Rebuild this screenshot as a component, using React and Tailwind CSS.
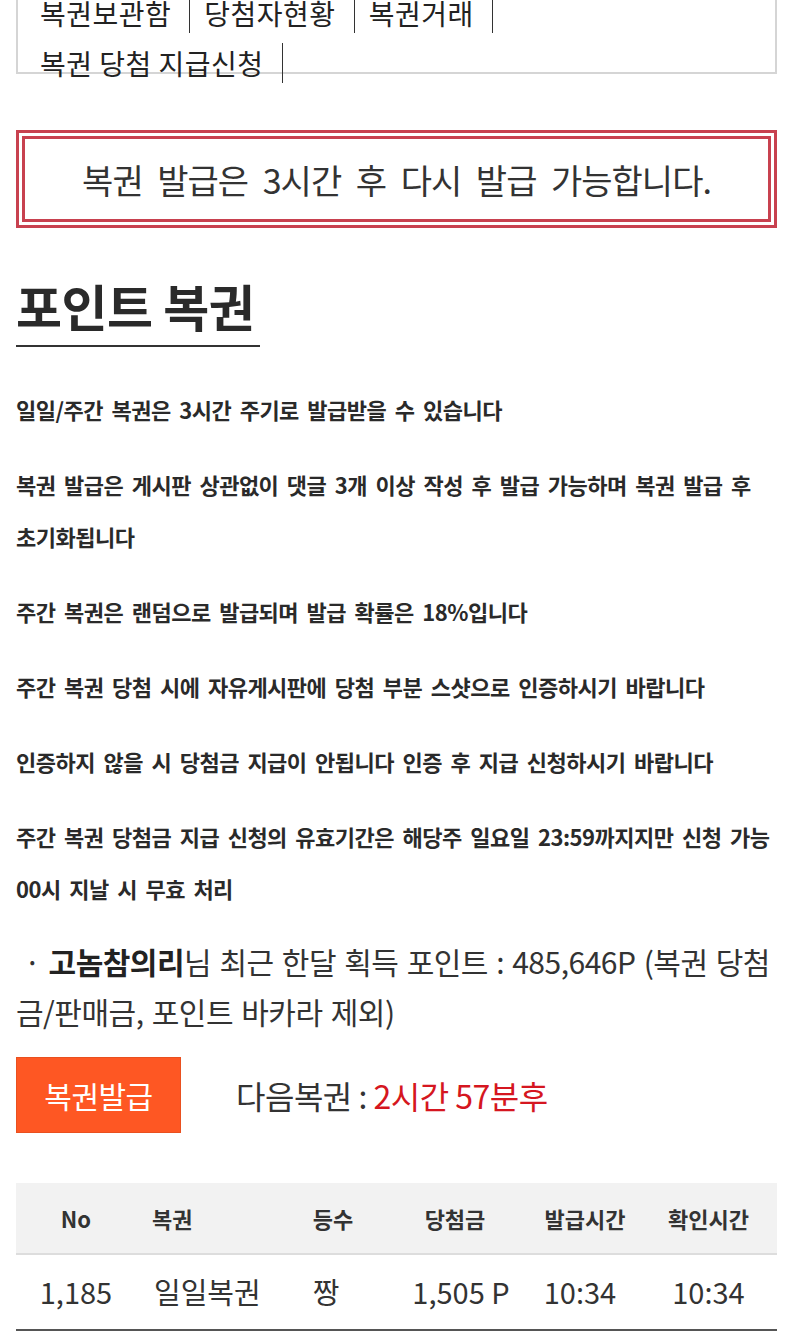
const font = { fontFamily: '"Noto Sans CJK KR", "Noto Sans", sans-serif' }

// each rule is a list of its visual lines
const rules = [
  ['일일/주간 복권은 3시간 주기로 발급받을 수 있습니다'],
  ['복권 발급은 게시판 상관없이 댓글 3개 이상 작성 후 발급 가능하며 복권 발급 후', '초기화됩니다'],
  ['주간 복권은 랜덤으로 발급되며 발급 확률은 18%입니다'],
  ['주간 복권 당첨 시에 자유게시판에 당첨 부분 스샷으로 인증하시기 바랍니다'],
  ['인증하지 않을 시 당첨금 지급이 안됩니다 인증 후 지급 신청하시기 바랍니다'],
  ['주간 복권 당첨금 지급 신청의 유효기간은 해당주 일요일 23:59까지지만 신청 가능', '00시 지날 시 무효 처리'],
]

const menu = [['복권보관함', '당첨자현황', '복권거래'], ['복권 당첨 지급신청']]

const rows = [{ no: '1,185', name: '일일복권', rank: '짱', prize: '1,505 P', issued: '10:34', checked: '10:34' }]

export default function App() {
  return (
    <div className="min-h-[1334px] bg-white pl-4 pr-[23px] text-[#333]" style={font}>
      <div className="mt-[-26px] h-[100px] border-2 border-[#d5d5d5] px-[22px] pt-[12px] text-[28px] leading-[50px] text-[#222]">
        {menu.map((line, i) => (
          <div key={i}>
            {line.map((item) => (
              <span key={item} className="mr-[14px] border-r border-[#333] pr-[18px] tracking-[0.5px]">
                {item}
              </span>
            ))}
          </div>
        ))}
      </div>

      <div className="mt-[56px] border-[3px] border-[#c8414f] p-[3px]">
        <div className="flex h-[86px] items-center justify-center border-[3px] border-[#c8414f] text-[34px] tracking-[-1px] [word-spacing:8px]">
          복권 발급은 3시간 후 다시 발급 가능합니다.
        </div>
      </div>

      <h1 className="mt-[47px] inline-block border-b-2 border-[#333] pb-[10px] pr-[6px] text-[50px] font-bold leading-[60px] tracking-[-0.5px] text-[#2a2a2a]">
        포인트 복권
      </h1>

      <div className="mt-[36px] flex flex-col gap-[23px] text-[22px] font-bold leading-[52px] tracking-[-0.5px] text-[#2a2a2a] [word-spacing:4px]">
        {rules.map((lines) => (
          <p key={lines[0]} className="whitespace-nowrap">
            {lines.map((l, i) => (
              <span key={i} className="block">
                {l}
              </span>
            ))}
          </p>
        ))}
      </div>

      <p className="mt-[22px] whitespace-nowrap pl-[8px] text-[30px] leading-[50px] tracking-[-0.5px] [word-spacing:2px]">
        ·&nbsp;<b className="font-bold text-[#222]">고놈참의리</b>님 최근 한달 획득 포인트 : 485,646P (복권 당첨
        <br />
        <span className="ml-[-8px]">금/판매금, 포인트 바카라 제외)</span>
      </p>

      <div className="mt-[21px] flex items-center">
        <button className="h-[76px] w-[165px] border border-[#e9501f] bg-[#fe5723] text-[30px] tracking-[-0.5px] text-white">
          복권발급
        </button>
        <span className="ml-[55px] text-[32px] tracking-[-0.5px]">
          다음복권 :&nbsp;<span className="text-[#d51620]">2시간 57분후</span>
        </span>
      </div>

      <div className="mt-[50px] border-b-2 border-[#555]">
        <div className="grid h-[72px] grid-cols-[120px_150px_94px_150px_110px_137px] items-center border-b-2 border-[#dddddd] bg-[#f2f2f2] text-[22px] font-bold text-[#333]">
          <span className="text-center">No</span>
          <span className="pl-[16px]">복권</span>
          <span className="text-center">등수</span>
          <span className="text-center">당첨금</span>
          <span className="text-center">발급시간</span>
          <span className="text-center">확인시간</span>
        </div>
        {rows.map((r) => (
          <div key={r.no} className="grid h-[74px] grid-cols-[120px_150px_94px_150px_110px_137px] items-center text-[29px]">
            <span className="text-center">{r.no}</span>
            <span className="pl-[18px]">{r.name}</span>
            <span className="pr-[14px] text-center">{r.rank}</span>
            <span className="pl-[12px] text-center">{r.prize}</span>
            <span className="pr-[10px] text-center">{r.issued}</span>
            <span className="text-center">{r.checked}</span>
          </div>
        ))}
      </div>
    </div>
  )
}
